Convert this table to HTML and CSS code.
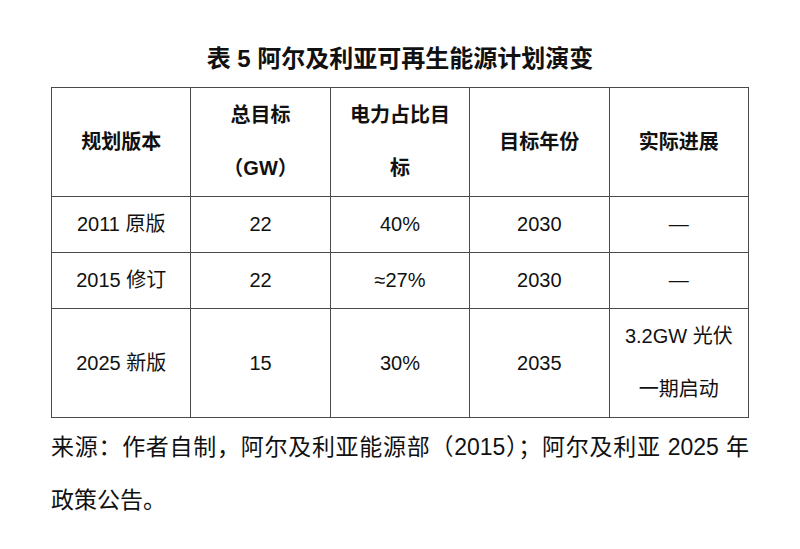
FILE: index.html
```html
<!DOCTYPE html>
<html lang="zh-CN">
<head>
<meta charset="utf-8">
<title>表 5 阿尔及利亚可再生能源计划演变</title>
<link rel="stylesheet" href="styles.css">
</head>
<body>
<main class="page">
  <h1 class="title">表 <span class="num">5</span> 阿尔及利亚可再生能源计划演变</h1>
  <table class="plan">
    <thead>
      <tr>
        <th>规划版本</th>
        <th>总目标<br>（GW）</th>
        <th>电力占比目<br>标</th>
        <th>目标年份</th>
        <th>实际进展</th>
      </tr>
    </thead>
    <tbody>
      <tr>
        <td>2011 原版</td>
        <td>22</td>
        <td>40%</td>
        <td>2030</td>
        <td>—</td>
      </tr>
      <tr>
        <td>2015 修订</td>
        <td>22</td>
        <td>≈27%</td>
        <td>2030</td>
        <td>—</td>
      </tr>
      <tr>
        <td>2025 新版</td>
        <td>15</td>
        <td>30%</td>
        <td>2035</td>
        <td>3.2GW 光伏<br>一期启动</td>
      </tr>
    </tbody>
  </table>
  <p class="source">来源：作者自制，阿尔及利亚能源部（2015）；阿尔及利亚 2025 年政策公告。</p>
</main>
</body>
</html>
```

FILE: styles.css
```css
html, body {
  margin: 0;
  padding: 0;
  background: #ffffff;
}

body {
  font-family: "Liberation Sans", "Noto Sans CJK SC", sans-serif;
  color: #111111;
}

.page {
  width: 698px;
  margin: 0 auto;
}

.title {
  margin: 39px 0 8px;
  font-size: 24px;
  line-height: 40px;
  font-weight: 700;
  text-align: center;
}

.plan {
  width: 698px;
  border-collapse: collapse;
  table-layout: fixed;
}

.plan th,
.plan td {
  border: 1px solid #4a4a4a;
  padding: 1px 6px;
  font-size: 20px;
  line-height: 53px;
  text-align: center;
  vertical-align: middle;
}

.plan th {
  font-weight: 700;
}

.plan td {
  font-weight: 400;
}

.source {
  margin: 3px 0 0;
  font-size: 23px;
  line-height: 53px;
  text-align: justify;
}
```
